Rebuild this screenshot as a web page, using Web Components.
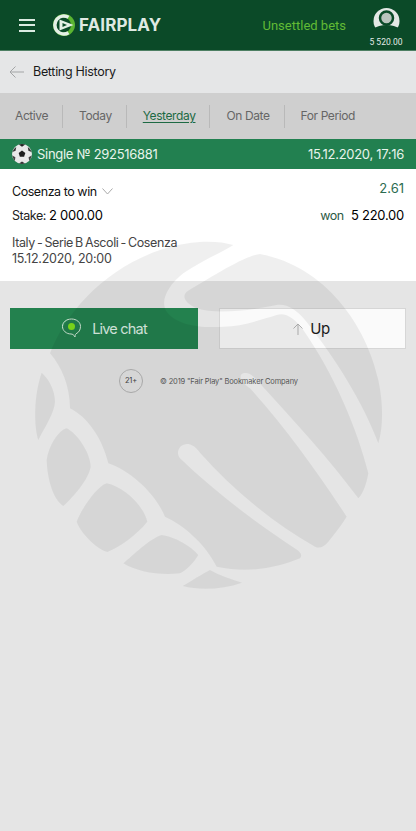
<!DOCTYPE html>
<html lang="en">
<head>
<meta charset="utf-8">
<title>Betting History</title>
<style>
  html, body { margin: 0; padding: 0; background: #e5e5e5; }
  body { font-family: Inter, "Liberation Sans", sans-serif; }
</style>
</head>
<body>
<fp-page>
  <fp-header balance="5 520.00">Unsettled bets</fp-header>
  <fp-back>Betting History</fp-back>
  <fp-tabs>
    <fp-tab>Active</fp-tab>
    <fp-tab>Today</fp-tab>
    <fp-tab active>Yesterday</fp-tab>
    <fp-tab>On Date</fp-tab>
    <fp-tab last>For Period</fp-tab>
  </fp-tabs>
  <fp-bet-title date="15.12.2020, 17:16">Single № 292516881</fp-bet-title>
  <fp-bet-card pick="Cosenza to win" odds="2.61" stake="2 000.00" won="5 220.00"
    league="Italy - Serie B Ascoli - Cosenza" date="15.12.2020, 20:00"></fp-bet-card>
  <fp-actions></fp-actions>
  <fp-footer>© 2019 "Fair Play" Bookmaker Company</fp-footer>
  <fp-watermark></fp-watermark>
</fp-page>

<script>
// page shell, watermark is laid over everything from here
class FpPage extends HTMLElement {
  constructor() {
    super();
    this.attachShadow({ mode: "open" });
    this.shadowRoot.innerHTML = `
      <style>
        :host { display: flex; flex-direction: column; position: relative; height: 831px; overflow: hidden; background: #e5e5e5; }
      </style>
      <slot></slot>`;
  }
}

class FpHeader extends HTMLElement {
  constructor() {
    super();
    this.attachShadow({ mode: "open" });
  }
  connectedCallback() {
    const balance = this.getAttribute("balance");
    this.shadowRoot.innerHTML = `
      <style>
        :host { display: flex; align-items: center; height: 50px; background: #0b4a28; border-bottom: 1px solid #4d7f63; flex: none; }
        .burger { width: 16px; margin-left: 19px; display: flex; flex-direction: column; gap: 3.500px; }
        .burger i { display: block; height: 2px; background: #dcebe2; }
        .logo { display: flex; align-items: center; margin-left: 18px; gap: 4px; }
        .word { font: 700 17px Inter, "Liberation Sans", sans-serif; letter-spacing: .1px; color: #dfe9e2; }
        .bets { margin-left: auto; margin-right: 20px; font: 13px Roboto, "Liberation Sans", sans-serif; color: #62bb35; }
        .user { width: 40px; margin-right: 10px; display: flex; flex-direction: column; align-items: center; padding-top: 4px; }
        .user span { font: 8.500px/10px Roboto, "Liberation Sans", sans-serif; color: #e4ece7; margin-top: 7px; white-space: nowrap; }
        svg { display: block; }
      </style>
      <div class="burger"><i></i><i></i><i></i></div>
      <div class="logo">
        <svg width="22" height="22" viewBox="0 0 22 22">
          <circle cx="11" cy="11" r="11" fill="#5bb531"/>
          <circle cx="10.500" cy="11" r="7.500" fill="#0b4a28"/>
          <path d="M15.500 3.300A9 9 0 1 0 15.500 18.700" fill="none" stroke="#e4efe6" stroke-width="3.500"/>
          <path d="M6.500 5.500L20.500 11 6.500 16.500z" fill="#e4efe6"/>
          <path d="M9.500 9v4l4.500-2z" fill="#0b4a28"/>
        </svg>
        <span class="word">FAIRPLAY</span>
      </div>
      <span class="bets"><slot></slot></span>
      <div class="user">
        <svg width="27" height="22" viewBox="0 0 27 22">
          <circle cx="13.500" cy="13" r="13" fill="#e4e8e5"/>
          <path d="M0 22V21C7 15.500 20 15.500 27 21V22z" fill="#0b4a28"/>
          <circle cx="13.500" cy="10" r="6.500" fill="#b9c4bd" stroke="#0b4a28" stroke-width="2.500"/>
        </svg>
        <span>${balance}</span>
      </div>`;
  }
}

class FpBack extends HTMLElement {
  constructor() {
    super();
    this.attachShadow({ mode: "open" });
    this.shadowRoot.innerHTML = `
      <style>
        :host { display: flex; align-items: center; height: 42px; background: #e5e6e7; flex: none; color: #1a1a1a;
                font: 12.500px Inter, "Liberation Sans", sans-serif; letter-spacing: -.3px; }
        svg { margin: 0 9px; display: block; }
        span { margin-top: -2px; }
      </style>
      <svg width="15" height="12" viewBox="0 0 15 12" fill="none" stroke="#a3a5a6" stroke-width="1">
        <path d="M15 6H1M6.500 .5L1 6l5.500 5.500"/>
      </svg>
      <span><slot></slot></span>`;
  }
}

class FpTabs extends HTMLElement {
  constructor() {
    super();
    this.attachShadow({ mode: "open" });
    this.shadowRoot.innerHTML = `
      <style>
        :host { display: flex; align-items: center; height: 46px; background: #cfcfcf; padding-left: 15px; flex: none; }
      </style>
      <slot></slot>`;
  }
}

class FpTab extends HTMLElement {
  constructor() {
    super();
    this.attachShadow({ mode: "open" });
    this.shadowRoot.innerHTML = `
      <style>
        :host { display: block; height: 23px; padding-right: 14px; margin-right: 16px; border-right: 1px solid #b9b9b9;
                font: 12px/21px Inter, "Liberation Sans", sans-serif; letter-spacing: -.4px; color: #666; }
        :host([last]) { border-right: 0; }
        :host([active]) { color: #1d6a44; text-decoration: underline; text-underline-offset: 2px; }
      </style>
      <slot></slot>`;
  }
}

class FpBetTitle extends HTMLElement {
  constructor() {
    super();
    this.attachShadow({ mode: "open" });
  }
  connectedCallback() {
    this.shadowRoot.innerHTML = `
      <style>
        :host { display: flex; align-items: center; height: 30px; background: #228050; color: #e8f4ec; flex: none;
                font: 13px Inter, "Liberation Sans", sans-serif; letter-spacing: -.3px; padding: 0 12px; }
        svg { display: block; margin-right: 5px; }
        .date { margin-left: auto; }
      </style>
      <svg width="20" height="20" viewBox="0 0 20 20">
        <circle cx="10" cy="10" r="10" fill="#e8e8e8"/>
        <path d="M10 6.500l3.300 2.400-1.200 3.900H7.900L6.700 8.900z" fill="#1c1c1c"/>
        <path d="M6.800 .6L10 2.800 13.200 .6A10 10 0 0 0 6.800 .6z" fill="#222"/>
        <path d="M.3 8l3.300-1.200.6-3.700A10 10 0 0 0 .3 8z" fill="#333"/>
        <path d="M19.700 8l-3.300-1.200-.6-3.700A10 10 0 0 1 19.700 8z" fill="#333"/>
        <path d="M2.800 17l.6-3.700L.3 11.500A10 10 0 0 0 2.800 17z" fill="#444"/>
        <path d="M17.200 17l-.6-3.700 3.100-1.800A10 10 0 0 1 17.200 17z" fill="#444"/>
        <path d="M7 19.500l3-2 3 2A10 10 0 0 1 7 19.500z" fill="#333"/>
      </svg>
      <span><slot></slot></span>
      <span class="date">${this.getAttribute("date")}</span>`;
  }
}

class FpBetCard extends HTMLElement {
  constructor() {
    super();
    this.attachShadow({ mode: "open" });
  }
  connectedCallback() {
    const a = n => this.getAttribute(n);
    this.shadowRoot.innerHTML = `
      <style>
        :host { display: block; height: 112px; background: #fff; padding: 12px 12px 0; box-sizing: border-box; flex: none;
                font: 12.500px Inter, "Liberation Sans", sans-serif; letter-spacing: -.45px; color: #111; }
        .row { display: flex; justify-content: space-between; }
        .first { height: 24px; align-items: flex-start; }
        .pick { display: flex; align-items: center; gap: 5px; padding-top: 3px; line-height: 15px; }
        .odds { font-size: 13px; color: #2c6c50; line-height: 15px; letter-spacing: 0; }
        .stake { height: 23px; line-height: 20px; color: #222; }
        .stake b { font-weight: 400; font-size: 13px; letter-spacing: -.25px; color: #000; }
        .won { color: #2d5a45; margin-right: 4px; }
        .info { color: #444; line-height: 16px; padding-top: 7px; }
        .league { letter-spacing: -.4px; word-spacing: -1px; }
        .when { letter-spacing: -.25px; }
      </style>
      <div class="row first">
        <span class="pick">${a("pick")}
          <svg width="11" height="7" viewBox="0 0 11 7" fill="none" stroke="#a9a9a9"><path d="M.5 .5L5.500 6l5-5.500"/></svg>
        </span>
        <span class="odds">${a("odds")}</span>
      </div>
      <div class="row stake">
        <span>Stake: <b>${a("stake")}</b></span>
        <span><span class="won">won</span> <b>${a("won")}</b></span>
      </div>
      <div class="info"><span class="league">${a("league")}</span><br><span class="when">${a("date")}</span></div>`;
  }
}

class FpActions extends HTMLElement {
  constructor() {
    super();
    this.attachShadow({ mode: "open" });
    this.shadowRoot.innerHTML = `
      <style>
        :host { display: flex; justify-content: space-between; margin: 27px 10px 0; flex: none; height: 41px;
                font: 14.500px Inter, "Liberation Sans", sans-serif; letter-spacing: -.8px; }
        .btn { width: 188px; display: flex; align-items: center; justify-content: center; box-sizing: border-box; }
        .chat { background: #23814e; color: #dcefe4; gap: 10px; }
        .up { width: 187px; background: #fafafa; border: 1px solid #d6d6d6; color: #1c1c1c; gap: 7px; font-size: 15px; letter-spacing: -.4px; padding-right: 2px; }
        svg { display: block; }
      </style>
      <div class="btn chat">
        <svg width="21" height="21" viewBox="0 0 21 21" fill="none">
          <path d="M10.500 1C5.500 1 1.500 4.200 1.500 8.500S5.500 16 10 16c1.500 0 2.800.8 4 3 0-1.600.2-2.500 1-3.200 2.800-1.300 4.500-4 4.500-7.300C19.500 4.200 15.500 1 10.500 1z" stroke="#cfe8d6" stroke-width="1"/>
          <circle cx="10.500" cy="8.500" r="3.500" fill="#7fe01c"/>
        </svg>
        Live chat
      </div>
      <div class="btn up">
        <svg width="10" height="12" viewBox="0 0 10 12" fill="none" stroke="#b5b5b5"><path d="M5 12V1M.5 5.500L5 1l4.500 4.500"/></svg>
        Up
      </div>`;
  }
}

class FpFooter extends HTMLElement {
  constructor() {
    super();
    this.attachShadow({ mode: "open" });
    this.shadowRoot.innerHTML = `
      <style>
        :host { display: flex; align-items: center; margin: 19px 0 0 119px; flex: none; gap: 17px; color: #5c5c5c;
                font: 7.500px/24px Inter, "Liberation Sans", sans-serif; letter-spacing: -.15px; }
        .age { width: 24px; height: 24px; border: 1px solid #b4b4b4; border-radius: 50%; box-sizing: border-box; display: flex;
               align-items: center; justify-content: center; font-size: 7.500px; color: #444; }
        .txt { padding-top: 2px; }
      </style>
      <span class="age">21+</span>
      <span class="txt"><slot></slot></span>`;
  }
}

// ball watermark, traced from the screenshot at 3x so the coords are offset
class FpWatermark extends HTMLElement {
  constructor() {
    super();
    this.attachShadow({ mode: "open" });
    this.shadowRoot.innerHTML = `
      <style>
        :host { position: absolute; left: 0; top: 0; width: 416px; height: 831px; pointer-events: none; }
        svg { display: block; }
      </style>
      <svg width="416" height="831" viewBox="0 0 416 831">
        <g transform="translate(20 230) scale(.33333)" fill="#000" fill-opacity=".062">
          <path d="M640 45C590 30 510 30 420 60C260 115 140 240 90 370C125 410 150 470 150 535C200 560 245 620 265 700C335 725 405 790 435 860C490 885 555 940 590 1010C680 1030 770 1015 840 985C848 975 842 968 832 960C710 880 590 790 480 685C465 665 480 640 505 642C520 645 530 655 540 668C640 780 760 880 885 950C900 957 912 950 925 935C945 910 965 885 980 860C885 715 790 585 690 475C660 455 655 435 670 430C685 425 697 435 710 450C820 570 930 690 1015 805C1030 790 1040 760 1045 730C1010 590 940 430 850 300C825 265 795 245 770 255C720 270 660 290 610 290C540 295 470 285 440 245C420 215 440 170 490 130C540 95 600 70 640 45z"/>
          <path d="M720 72C680 75 590 130 500 185C485 200 495 220 530 235C590 255 700 240 770 225C800 220 830 240 855 270C950 390 1030 520 1075 640C1090 590 1090 520 1075 450C1040 290 920 110 720 72z"/>
          <path d="M65 428C85 445 105 480 105 515C103 550 75 590 55 630C42 590 40 500 65 428z"/>
          <path d="M140 595C170 610 210 665 212 710C205 750 160 800 130 828C100 810 82 750 80 690C85 650 115 600 140 595z"/>
          <path d="M260 760C310 770 370 825 382 875C350 915 300 950 262 966C225 955 180 905 170 875C185 835 230 770 260 760z"/>
          <path d="M310 1000C340 975 390 925 425 915C465 920 515 950 535 975C520 1000 500 1020 480 1030C420 1038 350 1025 310 1000z"/>
          <path d="M488 1068C510 1055 550 1030 570 1020C595 1035 640 1050 666 1058C610 1078 540 1082 488 1068z"/>
        </g>
      </svg>`;
  }
}

customElements.define("fp-page", FpPage);
customElements.define("fp-header", FpHeader);
customElements.define("fp-back", FpBack);
customElements.define("fp-tabs", FpTabs);
customElements.define("fp-tab", FpTab);
customElements.define("fp-bet-title", FpBetTitle);
customElements.define("fp-bet-card", FpBetCard);
customElements.define("fp-actions", FpActions);
customElements.define("fp-footer", FpFooter);
customElements.define("fp-watermark", FpWatermark);
</script>
</body>
</html>
